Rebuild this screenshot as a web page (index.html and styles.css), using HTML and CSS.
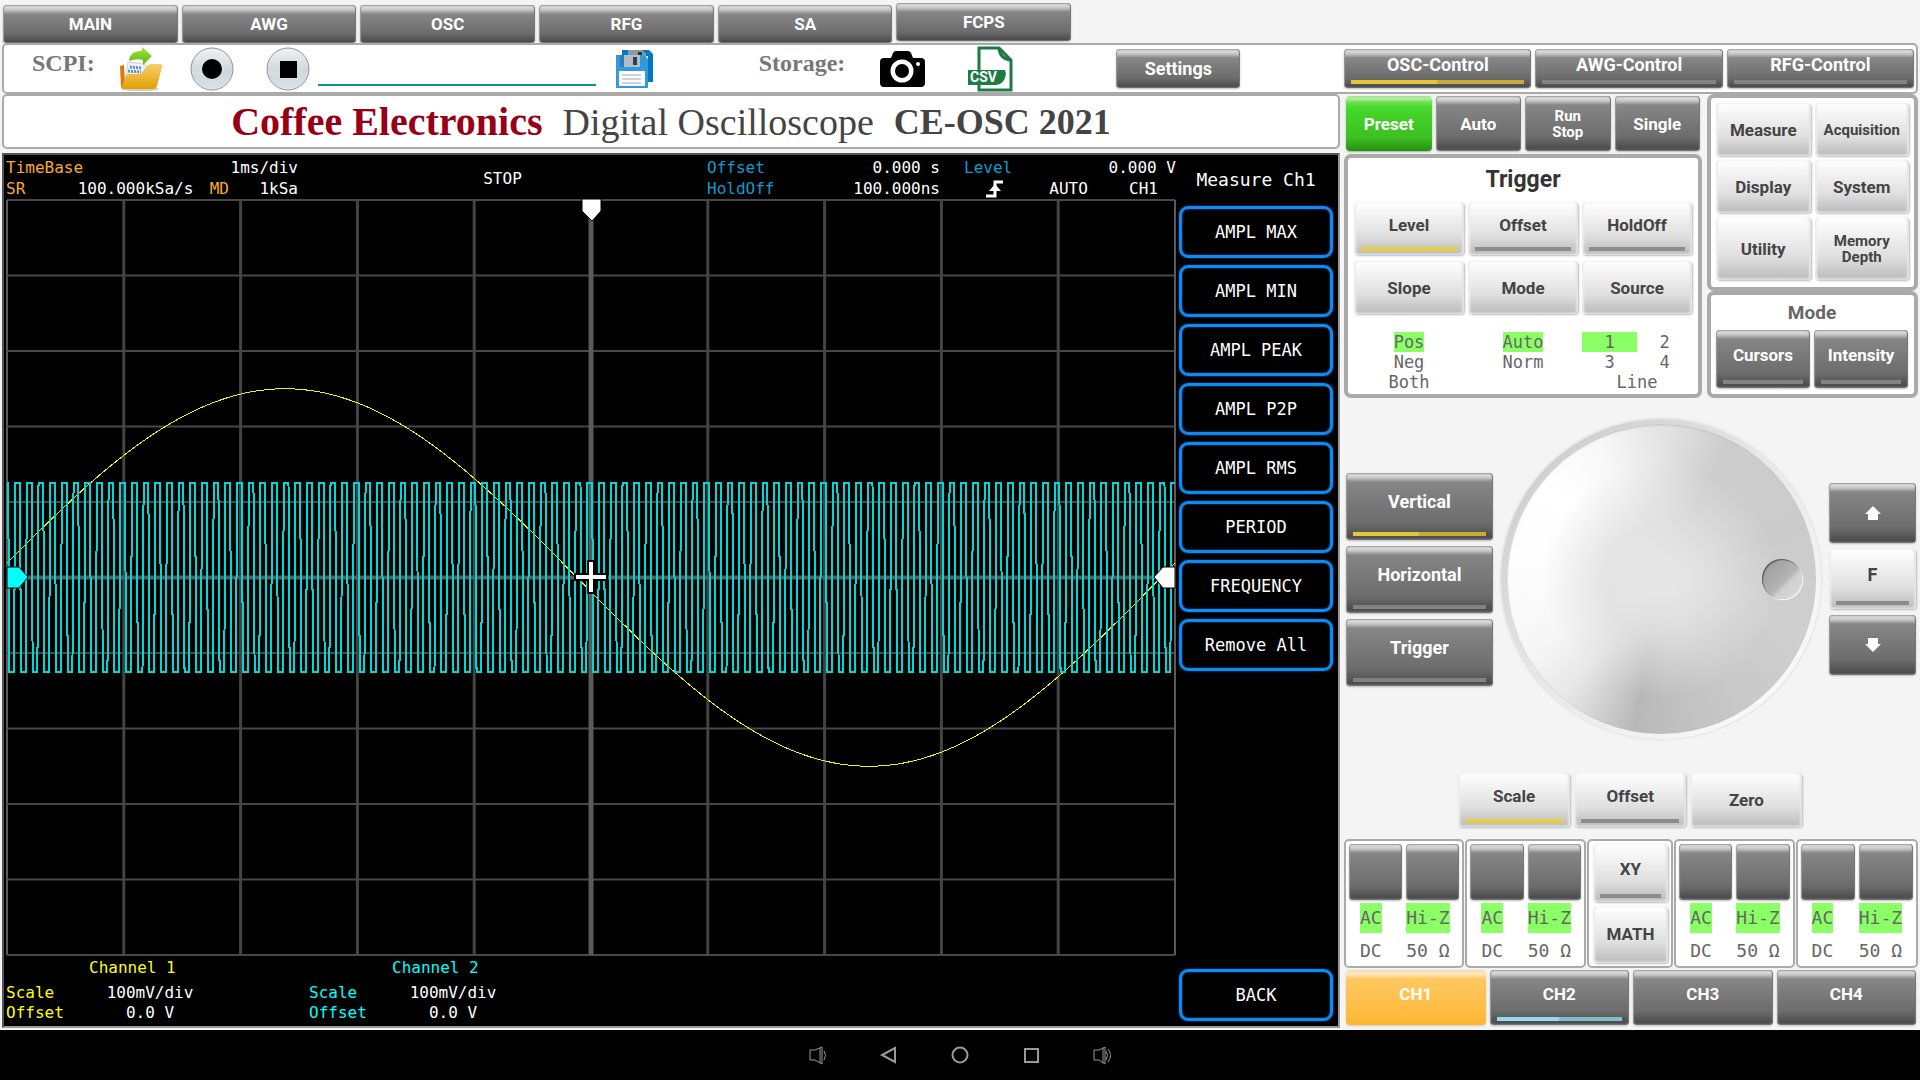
FILE: index.html
```html
<!DOCTYPE html>
<html lang="en">
<head>
<meta charset="utf-8">
<title>Coffee Electronics CE-OSC 2021</title>
<link rel="stylesheet" href="styles.css">
</head>
<body>
<nav class="tabs">
  <button class="btn dark">MAIN</button>
  <button class="btn dark">AWG</button>
  <button class="btn dark">OSC</button>
  <button class="btn dark">RFG</button>
  <button class="btn dark">SA</button>
  <button class="btn dark raised">FCPS</button>
</nav>

<header class="toolbar">
  <div class="tools">
    <label class="tool-label scpi-label" for="scpi">SCPI:</label>
    <button class="icon open" aria-label="Open">
      <svg viewBox="0 0 44 44" width="44" height="44">
        <defs>
          <linearGradient id="fold" x1="0" y1="0" x2="0" y2="1"><stop offset="0" stop-color="#f7cf6a"/><stop offset="1" stop-color="#e3a004"/></linearGradient>
          <linearGradient id="arr" x1="0" y1="0" x2="0" y2="1"><stop offset="0" stop-color="#a4e23c"/><stop offset="1" stop-color="#5cb811"/></linearGradient>
        </defs>
        <ellipse cx="21" cy="42" rx="19" ry="2" fill="#ccc"/>
        <path d="M1 19l4-1 1 18-3 5-1-1z" fill="#d9780c"/>
        <path d="M9 15l16 2 6 5-6 12H6z" fill="#eef1f5" stroke="#c9d2dc"/>
        <path d="M11 20l12 1M9 24l13 1" stroke="#6d8fc0" stroke-width="3" stroke-dasharray="2 1"/>
        <path d="M8 27h14l5-7q2-3 5-3h9q3 0 2 3l-5 19q-1 3-4 3H4q-2 0-1-3z" fill="url(#fold)"/>
        <path d="M10 14Q11 3 23 4V0l10 9-9 9v-5q-7-2-14 1z" fill="url(#arr)"/>
      </svg>
    </button>
    <button class="icon record" aria-label="Record">
      <svg viewBox="0 0 46 44" width="46" height="44">
        <defs><linearGradient id="disc" x1="0" y1="0" x2="0" y2="1"><stop offset="0" stop-color="#eff1f1"/><stop offset=".5" stop-color="#d3dadd"/><stop offset="1" stop-color="#eef3f6"/></linearGradient></defs>
        <circle cx="23" cy="22" r="21" fill="url(#disc)" stroke="#8b969e"/>
        <path d="M14 28q15 2 29-8q1 20-20 22-16-1-20-15z" fill="#c8d2da" opacity=".5"/>
        <circle cx="23" cy="22" r="10" fill="#000"/>
      </svg>
    </button>
    <button class="icon stop" aria-label="Stop">
      <svg viewBox="0 0 46 44" width="46" height="44">
        <circle cx="23" cy="22" r="21" fill="url(#disc)" stroke="#8b969e"/>
        <path d="M14 28q15 2 29-8q1 20-20 22-16-1-20-15z" fill="#c8d2da" opacity=".5"/>
        <path d="M15 14h17v17H15z" fill="#000"/>
      </svg>
    </button>
    <input class="scpi-input" id="scpi" type="text">
    <button class="icon save" aria-label="Save">
      <svg viewBox="0 0 44 44" width="44" height="44">
        <path d="M10 3h27l4 4v28h-5V9H10z" fill="#0078c4"/>
        <path d="M16 3h14l4 4v4H16z" fill="#8b9aa4"/><path d="M26 5h4v4h-4z" fill="#26323a"/>
        <path d="M4 8h28l4 4v29H4z" fill="#3498db"/>
        <path d="M8 8h20v12H8z" fill="#b0bec5"/><path d="M8 8h4v12H8z" fill="#2f7fb3"/><path d="M21 10h4v8h-4z" fill="#333f48"/>
        <path d="M7 24h26v15H7z" fill="#fff"/><path d="M10 28h19M10 32h19M10 36h19" stroke="#cdd5da" stroke-width="2"/>
      </svg>
    </button>
    <span class="tool-label storage-label">Storage:</span>
    <button class="icon camera" aria-label="Screenshot">
      <svg viewBox="0 0 46 44" width="46" height="44">
        <path d="M5 11h7l2-5q1-2 3-2h12q2 0 3 2l2 5h8q4 0 4 4v21q0 4-4 4H5q-4 0-4-4V15q0-4 4-4z"/>
        <circle cx="23" cy="24" r="11.500" fill="#fff"/><circle cx="23" cy="24" r="7"/><circle cx="39" cy="17" r="2" fill="#fff"/>
      </svg>
    </button>
    <button class="icon csv" aria-label="Export CSV">
      <svg viewBox="0 0 46 46" width="46" height="46">
        <path d="M12 24V2h20l12 12v30H12v-6" fill="none" stroke="#1f7a45" stroke-width="3"/>
        <path d="M32 2q1 11 12 12" fill="none" stroke="#1f7a45" stroke-width="3"/>
        <path d="M1 24h37l1 4q-2 11-10 11H1z" fill="#1f7a45"/>
        <text x="3" y="36" class="csv-text">CSV</text>
      </svg>
    </button>
    <button class="btn dark settings">Settings</button>
  </div>
  <div class="controls">
    <button class="btn dark lamp yellow"><span>OSC-Control</span></button>
    <button class="btn dark lamp"><span>AWG-Control</span></button>
    <button class="btn dark lamp"><span>RFG-Control</span></button>
  </div>
</header>

<main class="main">
  <section class="left">
    <h1 class="title"><span class="brand">Coffee Electronics</span><span class="kind">Digital Oscilloscope</span><span class="model">CE-OSC 2021</span></h1>
    <div class="scope">
      <div class="screen">
        <div class="readout">
          <div class="cell"><div class="line"><span class="amber">TimeBase</span><span>1ms/div</span></div>
            <div class="line"><span class="amber">SR</span><span class="rate">100.000kSa/s</span><span class="amber depth">MD</span><span>1kSa</span></div></div>
          <div class="state">STOP</div>
          <div class="cell"><div class="line"><span class="blue">Offset</span><span>0.000 s</span></div>
            <div class="line"><span class="blue">HoldOff</span><span>100.000ns</span></div></div>
          <div class="cell"><div class="line"><span class="blue">Level</span><span>0.000 V</span></div>
            <div class="line trig"><svg viewBox="0 0 18 18" width="18" height="18"><path d="M0 16h9V2h8" fill="none" stroke="#fff" stroke-width="3"/><path d="M3 11l6-7 6 7z" fill="#fff"/></svg><span>AUTO</span><span>CH1</span></div></div>
        </div>
        <svg class="graph" viewBox="0 0 1170 758" preserveAspectRatio="none">
          <g id="grid"></g>
          <polyline id="ch1" class="trace ch1-trace"/>
          <polyline id="ch2" class="trace ch2-trace"/>
          <path d="M576 0h19v12l-9 10-10-10z" fill="#fff" stroke="#000"/>
          <path d="M1 368h12l9 10-9 11H1z" fill="#0ff" stroke="#000"/>
          <path d="M1169 368h-12l-9 10 9 11h12z" fill="#fff" stroke="#000"/>
          <path d="M585 361v34M568 378h34" stroke="#000" stroke-width="8"/>
          <path d="M585 363v30M570 378h30" stroke="#fff" stroke-width="4"/>
        </svg>
        <div class="channels">
          <div class="channel yellow-text"><span class="name">Channel 1</span><span>Scale</span><span class="value">100mV/div</span><span>Offset</span><span class="value">0.0 V</span></div>
          <div class="channel cyan-text"><span class="name">Channel 2</span><span>Scale</span><span class="value">100mV/div</span><span>Offset</span><span class="value">0.0 V</span></div>
        </div>
      </div>
      <div class="menu">
        <h2 class="menu-title">Measure Ch1</h2>
        <button class="key">AMPL MAX</button>
        <button class="key">AMPL MIN</button>
        <button class="key">AMPL PEAK</button>
        <button class="key">AMPL P2P</button>
        <button class="key">AMPL RMS</button>
        <button class="key">PERIOD</button>
        <button class="key">FREQUENCY</button>
        <button class="key">Remove All</button>
        <button class="key back">BACK</button>
      </div>
    </div>
  </section>

  <section class="right">
    <div class="upper">
      <div class="upper-left">
        <div class="run">
          <button class="btn dark green">Preset</button>
          <button class="btn dark">Auto</button>
          <button class="btn dark small">Run<br>Stop</button>
          <button class="btn dark">Single</button>
        </div>
        <div class="panel thick trigger">
          <h2 class="trigger-title">Trigger</h2>
          <div class="trigger-keys">
            <button class="btn light lamp yellow"><span>Level</span></button>
            <button class="btn light lamp"><span>Offset</span></button>
            <button class="btn light lamp"><span>HoldOff</span></button>
            <button class="btn light">Slope</button>
            <button class="btn light">Mode</button>
            <button class="btn light">Source</button>
          </div>
          <div class="status">
            <div class="options"><span class="on">Pos</span><span>Neg</span><span>Both</span></div>
            <div class="options"><span class="on">Auto</span><span>Norm</span></div>
            <div class="sources"><span class="on">1</span><span>2</span><span>3</span><span>4</span><span class="wide">Line</span></div>
          </div>
        </div>
      </div>
      <div class="upper-right">
        <div class="panel thick functions">
          <button class="btn light">Measure</button>
          <button class="btn light small">Acquisition</button>
          <button class="btn light">Display</button>
          <button class="btn light">System</button>
          <button class="btn light">Utility</button>
          <button class="btn light small">Memory<br>Depth</button>
        </div>
        <div class="panel thick modes">
          <h2 class="mode-title">Mode</h2>
          <div class="mode-keys">
            <button class="btn dark lamp"><span>Cursors</span></button>
            <button class="btn dark lamp"><span>Intensity</span></button>
          </div>
        </div>
      </div>
    </div>

    <div class="dial">
      <div class="axis">
        <button class="btn dark lamp yellow"><span>Vertical</span></button>
        <button class="btn dark lamp"><span>Horizontal</span></button>
        <button class="btn dark lamp"><span>Trigger</span></button>
      </div>
      <div class="knob"><div class="knob-face"><div class="dimple"></div></div></div>
      <div class="step">
        <button class="btn dark" aria-label="Up"><svg viewBox="0 0 16 14" width="16" height="14"><path d="M8 0l8 8h-3v6H3V8H0z" fill="#fff"/></svg></button>
        <button class="btn light lamp"><span>F</span></button>
        <button class="btn dark" aria-label="Down"><svg viewBox="0 0 16 14" width="16" height="14"><path d="M8 14l8-8h-3V0H3v6H0z" fill="#fff"/></svg></button>
      </div>
    </div>

    <div class="knob-target">
      <button class="btn light lamp yellow"><span>Scale</span></button>
      <button class="btn light lamp"><span>Offset</span></button>
      <button class="btn light">Zero</button>
    </div>

    <div class="inputs">
      <div class="panel input"><button class="btn dark" aria-label="CH1 coupling"></button><button class="btn dark" aria-label="CH1 impedance"></button><span class="on">AC</span><span class="on">Hi-Z</span><span>DC</span><span>50 Ω</span></div>
      <div class="panel input"><button class="btn dark" aria-label="CH2 coupling"></button><button class="btn dark" aria-label="CH2 impedance"></button><span class="on">AC</span><span class="on">Hi-Z</span><span>DC</span><span>50 Ω</span></div>
      <div class="panel math"><button class="btn light lamp"><span>XY</span></button><button class="btn light">MATH</button></div>
      <div class="panel input"><button class="btn dark" aria-label="CH3 coupling"></button><button class="btn dark" aria-label="CH3 impedance"></button><span class="on">AC</span><span class="on">Hi-Z</span><span>DC</span><span>50 Ω</span></div>
      <div class="panel input"><button class="btn dark" aria-label="CH4 coupling"></button><button class="btn dark" aria-label="CH4 impedance"></button><span class="on">AC</span><span class="on">Hi-Z</span><span>DC</span><span>50 Ω</span></div>
    </div>

    <div class="select">
      <button class="btn dark lamp orange"><span>CH1</span></button>
      <button class="btn dark lamp cyan"><span>CH2</span></button>
      <button class="btn dark lamp off"><span>CH3</span></button>
      <button class="btn dark lamp off"><span>CH4</span></button>
    </div>
  </section>
</main>

<footer class="system">
  <button class="sys" aria-label="Volume down"><svg viewBox="0 0 20 20" width="20" height="20"><path d="M2 5h5l7-3v17l-7-4H2zM12 3v15M16 6q3 4 0 9"/></svg></button>
  <button class="sys" aria-label="Back"><svg viewBox="0 0 20 20" width="20" height="20"><path d="M16 3v14L3 10z"/></svg></button>
  <button class="sys" aria-label="Home"><svg viewBox="0 0 20 20" width="20" height="20"><circle cx="10" cy="10" r="7.500"/></svg></button>
  <button class="sys" aria-label="Recent"><svg viewBox="0 0 20 20" width="20" height="20"><path d="M4 4h13v13H4z"/></svg></button>
  <button class="sys" aria-label="Volume up"><svg viewBox="0 0 20 20" width="20" height="20"><path d="M2 5h5l6-3v17l-6-4H2zM11 3v15M14 6q3 4 0 9M16 4q5 6 0 13"/></svg></button>
</footer>
<script src="scope.js"></script>
</body>
</html>
```
FILE: scope.js
```js
// Screen geometry, in units of the graph's viewBox.
const LEFT = 1, TOP = 1, WIDTH = 1168, HEIGHT = 755, SAMPLES = 1000;
const MID_Y = TOP + HEIGHT / 2;
const DIV_Y = HEIGHT / 10;

const grid = document.getElementById("grid");
function rule(x1, y1, x2, y2, width, colour) {
  const line = document.createElementNS("http://www.w3.org/2000/svg", "line");
  const attrs = { x1, y1, x2, y2, stroke: colour, "stroke-width": width };
  for (const name in attrs) line.setAttribute(name, attrs[name]);
  grid.appendChild(line);
}
for (let i = 0; i <= 10; i++) {
  const x = LEFT + WIDTH * i / 10, y = TOP + DIV_Y * i;
  if (i !== 5) {
    rule(LEFT, y, LEFT + WIDTH, y, 2, "#484848");
    rule(x, TOP, x, TOP + HEIGHT, i % 10 ? 3 : 2, i % 10 ? "#444" : "#5a5a5a");
  }
}
rule(LEFT, MID_Y, LEFT + WIDTH, MID_Y, 4, "#5a5a5a");
rule(LEFT + WIDTH / 2, TOP, LEFT + WIDTH / 2, TOP + HEIGHT, 5, "#5a5a5a");

function trace(id, volts) {
  const points = [];
  for (let i = 0; i <= SAMPLES; i++) {
    const x = LEFT + WIDTH * i / SAMPLES;
    points.push(x.toFixed(2) + "," + (MID_Y - volts(i) * DIV_Y).toFixed(2));
  }
  document.getElementById(id).setAttribute("points", points.join(" "));
}
trace("ch1", i => 2.5 * Math.sin(2 * Math.PI * (i + 12) / SAMPLES));
trace("ch2", i => (i + 3) % 10 < 5 ? 1.25 : -1.25);
```
FILE: styles.css
```css
* { box-sizing: border-box; }

body {
  margin: 0;
  min-height: 100vh;
  display: flex;
  flex-direction: column;
  background: #f4f4f4;
  color: #444;
  font-family: Roboto, "Liberation Sans", sans-serif;
}

h1, h2 { margin: 0; }

button { margin: 0; padding: 0; border: 0; background: none; font-family: inherit; }

/* Glossy push buttons */
.btn {
  display: flex;
  align-items: center;
  justify-content: center;
  min-width: 0;
  border-radius: 4px;
  font-size: 17px;
  line-height: 18px;
  font-weight: 700;
}
.dark {
  color: #fff;
  background: linear-gradient(#a0a0a0, #dcdcdc 2px, #c4c4c4 5px, #868686 9px, #6c6c6c 75%, #4c4c4c 96%, #777);
  box-shadow: inset 1px 0 1px #999, inset -1px 0 1px #777, 0 1px 2px #bbb;
}
.light {
  color: #444;
  background: linear-gradient(#fff, #f8f8f8 15%, #dedede 65%, #c0c0c0 94%, #d4d4d4);
  box-shadow: inset 2px 0 2px #eee, inset -2px 0 2px #e4e4e4, 1px 1px 2px #bbb;
}
.green {
  background: linear-gradient(#a8dc98, #b0f0a0 3px, #6fe053 6px, #45d82a 12px, #3cc022 75%, #279010);
  box-shadow: 0 1px 2px #aaa;
}
.dark.orange {
  background: linear-gradient(#f0d8b0, #ffe9c0 4px, #ffc860 9px, #ffc04a 60%, #ffb62e);
  box-shadow: 0 1px 2px #ccc;
}
.small { font-size: 15px; line-height: 16px; }

/* Buttons with an indicator strip */
.lamp { flex-direction: column; align-items: stretch; }
.lamp span { flex: 1; display: flex; align-items: center; justify-content: center; }
.lamp::after { content: ""; height: 4px; margin: 0 7px 4px; background: #828282; }
.light.lamp::after { background: #8c8c8c; }
.lamp.yellow::after { background: linear-gradient(90deg, #e3c63a 50%, #c9ac38 50%); }
.light.yellow::after { background: #e6cd48; }
.lamp.cyan::after { background: linear-gradient(90deg, #93dcf0 50%, #80bccb 50%); }
.lamp.orange::after, .lamp.off::after { background: transparent; }

/* Top bars */
.tabs {
  display: grid;
  grid-template-columns: repeat(6, 1fr);
  gap: 4px;
  width: 56%;
  height: 43px;
  padding: 5px 4px 0 3px;
}
.tabs .btn { height: 38px; }
.tabs .raised { align-self: start; margin-top: -2px; }

.toolbar {
  display: grid;
  grid-template-columns: 1338fr 574fr;
  gap: 4px;
  height: 51px;
  margin: 0 2px;
  background: #fff;
  border: 2px solid #aaa;
  border-radius: 5px;
}
.tools { display: flex; align-items: center; }
.tool-label {
  font-family: "Liberation Serif", serif;
  font-size: 24px;
  line-height: 28px;
  font-weight: 700;
  color: #777;
  padding-bottom: 12px;
}
.icon { flex: none; display: flex; }
.scpi-label { margin-left: 28px; }
.open { margin-left: 24px; }
.record { margin-left: 26px; }
.stop { margin-left: 30px; }
.scpi-input {
  flex: 0 1 278px;
  min-width: 60px;
  height: 34px;
  margin-left: 7px;
  border: 0;
  border-bottom: 2px solid #0c9686;
  outline: 0;
}
.save { margin-left: 16px; }
.storage-label { margin-left: 103px; }
.camera { margin-left: 34px; }
.csv { margin-left: 42px; }
.csv-text { font: 700 14px Roboto, sans-serif; fill: #fff; }
.settings { width: 124px; height: 39px; margin-left: 103px; font-size: 18px; }
.controls {
  display: grid;
  grid-template-columns: repeat(3, 1fr);
  gap: 4px;
  padding: 4px 2px 4px 1px;
}
.controls .btn { font-size: 18px; }

.main {
  flex: 1;
  display: grid;
  grid-template-columns: 1338fr 574fr;
  gap: 4px;
  padding: 0 2px 2px;
}
.left { display: flex; flex-direction: column; gap: 4px; min-width: 0; }
.title {
  display: flex;
  align-items: center;
  justify-content: center;
  gap: 20px;
  height: 55px;
  background: #fff;
  border: 2px solid #aaa;
  border-radius: 5px;
  font-family: "Liberation Serif", serif;
  font-weight: 400;
  line-height: 46px;
}
.brand { font-size: 40px; font-weight: 700; color: #980018; }
.kind { font-size: 38px; }
.model { font-size: 36px; font-weight: 700; }

/* Oscilloscope display */
.scope {
  flex: 1;
  display: grid;
  grid-template-columns: 1fr 154px;
  gap: 3px;
  padding: 0 5px 0 2px;
  background: #000;
  border: 2px solid #555;
  border-right-color: #999;
  border-bottom-color: #999;
  color: #fff;
  font-family: "DejaVu Sans Mono", monospace;
  font-size: 16px;
  line-height: 22px;
}
.screen { display: flex; flex-direction: column; min-width: 0; }
.readout {
  display: grid;
  grid-template-columns: 292fr 361fr 233fr 212fr;
  column-gap: 24px;
  height: 44px;
  padding-top: 2px;
  line-height: 21px;
}
.line { display: flex; justify-content: space-between; }
.rate { margin-left: 36px; }
.depth { margin-right: 14px; }
.state { display: flex; align-items: center; justify-content: center; }
.trig { align-items: center; padding: 0 18px 0 22px; }
.trig span:first-of-type { margin-left: 4px; }
.amber { color: #f8ac28; }
.blue { color: #0c9cd0; }
.graph { flex: 1; width: 100%; min-height: 0; display: block; }
.trace { fill: none; shape-rendering: crispEdges; }
.ch1-trace { stroke: #f4f400; stroke-width: 1; }
.ch2-trace { stroke: #00d8d8; stroke-width: 2; }
.channels { display: flex; gap: 11px; height: 69px; padding-top: 1px; }
.channel {
  display: grid;
  grid-template-columns: 66px 156px;
  grid-template-rows: 25px 20px 20px;
  width: 292px;
  line-height: 20px;
}
.name { grid-column: 1 / 3; padding-left: 83px; }
.value { color: #fff; text-align: center; }
.yellow-text { color: #ff0; }
.cyan-text { color: #0ff; }

.menu { display: flex; flex-direction: column; gap: 7px; padding-bottom: 5px; }
.menu-title { height: 44px; font-size: 18px; line-height: 50px; font-weight: 400; text-align: center; }
.key {
  height: 52px;
  border: 3px solid #0a8cf4;
  border-radius: 9px;
  box-shadow: 0 0 2px #06c, inset 0 0 2px #06c;
  color: #fff;
  font-size: 17px;
}
.back { margin-top: auto; }

/* Control panel */
.right { display: flex; flex-direction: column; min-width: 0; }
.panel { background: #fff; border: 2px solid #aaa; border-radius: 5px; }
.thick { border-width: 4px; border-radius: 7px; }
.upper { display: grid; grid-template-columns: 358fr 211fr; gap: 5px; }
.upper-left, .upper-right { display: flex; flex-direction: column; }
.run {
  display: grid;
  grid-template-columns: repeat(4, 1fr);
  gap: 4px;
  height: 60px;
  padding: 2px 2px 3px;
}
.trigger { height: 244px; padding: 0 6px; }
.trigger-title { font-size: 23px; line-height: 44px; text-align: center; color: #333; font-weight: 700; }
.trigger-keys { display: grid; grid-template-columns: repeat(3, 1fr); grid-auto-rows: 53px; gap: 6px 4px; }
.status {
  display: grid;
  grid-template-columns: repeat(3, 1fr);
  gap: 4px;
  margin-top: 18px;
  font-family: "DejaVu Sans Mono", monospace;
  font-size: 17px;
  line-height: 20px;
  color: #666;
}
.options { display: flex; flex-direction: column; align-items: center; }
.sources { display: grid; grid-template-columns: 1fr 1fr; text-align: center; align-content: start; }
.wide { grid-column: 1 / 3; }
.on { background: #8bff66; }
.functions {
  display: grid;
  grid-template-columns: 1fr 1fr;
  grid-template-rows: 53px 53px 63px;
  gap: 4px;
  height: 197px;
  padding: 5px 5px 0;
}
.modes { height: 107px; padding: 0 6px 0 5px; }
.mode-title { font-size: 19px; line-height: 35px; text-align: center; color: #666; font-weight: 700; }
.mode-keys { display: grid; grid-template-columns: 1fr 1fr; gap: 4px; height: 58px; }

.dial {
  flex: 1;
  display: grid;
  grid-template-columns: 147px 1fr 87px;
  gap: 8px;
  align-items: center;
  padding: 0 2px;
}
.axis, .step { display: grid; gap: 6px; }
.axis .btn { height: 67px; font-size: 18px; }
.step .btn { height: 60px; font-size: 18px; }
.knob {
  aspect-ratio: 1;
  width: 100%;
  max-width: 320px;
  padding: 5px;
  border-radius: 50%;
  background: linear-gradient(135deg, #c6c6c6, #e6e6e6 45%, #fff);
  box-shadow: 0 0 3px #ccc;
}
.knob-face {
  display: flex;
  align-items: center;
  justify-content: flex-end;
  height: 100%;
  padding-right: 14px;
  border-radius: 50%;
  background:
    radial-gradient(circle, #e6e6e6 8%, rgba(224, 224, 224, .85) 26%, rgba(220, 220, 220, 0) 54%),
    conic-gradient(#e4e4e4, #cdcdcd 26deg, #cbcbcb 70deg, #cfcfcf 110deg, #c8c8c8 150deg, #bebebe 178deg, #b8b8b8 190deg, #cccccc 202deg, #e8e8e8 220deg, #f6f6f6 240deg, #fdfdfd 275deg, #fff 310deg, #f8f8f8 335deg, #e4e4e4);
  box-shadow: inset 1px 1px 2px #bbb;
}
.dimple {
  width: 40px;
  height: 40px;
  border-radius: 50%;
  background: linear-gradient(135deg, #989898, #b4b4b4 55%, #d0d0d0 65%, #dcdcdc);
  box-shadow: inset 1px 1px 1px #555, 1px 1px 1px #fff;
}

.knob-target {
  display: grid;
  grid-template-columns: repeat(3, 1fr);
  gap: 4px;
  width: 60%;
  height: 54px;
  margin: 13px 0 12px 114px;
}
.inputs { display: grid; grid-template-columns: 120fr 120fr 86fr 120fr 122fr; gap: 1px; height: 129px; }
.input {
  display: grid;
  grid-template-columns: 1fr 1fr;
  grid-template-rows: 56px 30px 30px;
  gap: 3px 4px;
  padding: 3px 3px 0;
  font-family: "DejaVu Sans Mono", monospace;
  font-size: 18px;
  line-height: 30px;
  color: #666;
}
.input span { justify-self: start; }
.input span:nth-of-type(odd) { margin-left: 11px; }
.math { display: grid; grid-template-rows: 1fr 1fr; gap: 4px; padding: 3px 3px 3px 4px; }
.select {
  display: grid;
  grid-template-columns: repeat(4, 1fr);
  gap: 4px;
  height: 60px;
  padding: 2px 2px 3px;
}

/* Device navigation bar */
.system {
  display: flex;
  justify-content: center;
  gap: 51px;
  height: 50px;
  background: #000;
}
.sys { display: flex; align-items: center; }
.sys path, .sys circle { fill: none; stroke: #999; stroke-width: 1; }
.sys:nth-child(n+2):nth-child(-n+4) path, .sys circle { stroke-width: 2; }
```
